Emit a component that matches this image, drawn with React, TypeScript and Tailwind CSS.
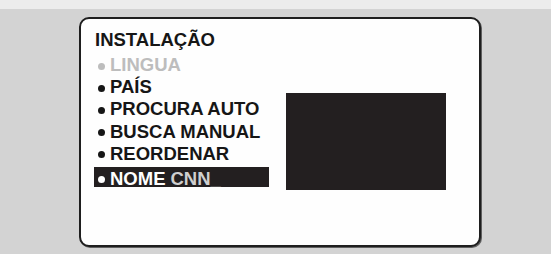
import React from "react";

const items: { label: string; muted?: boolean }[] = [
  { label: "LINGUA", muted: true },
  { label: "PAÍS" },
  { label: "PROCURA AUTO" },
  { label: "BUSCA MANUAL" },
  { label: "REORDENAR" },
];

function Dot({ className }: { className: string }) {
  return <span className={`mr-[5px] ml-[4px] inline-block h-[7px] w-[7px] shrink-0 rounded-full ${className}`} />;
}

export default function App() {
  return (
    <div
      className="flex h-[254px] w-[551px] flex-col overflow-hidden bg-[#d3d3d3]"
      style={{ fontFamily: '"Liberation Sans", Arial, sans-serif' }}
    >
      <div className="h-[9px] w-full shrink-0 bg-[#ececec]" />
      <div className="pl-[79px] pt-[8px]">
        <div className="flex h-[230px] w-[402px] rounded-[10px] border-2 border-[#1e1e1e] bg-[#fefefe] pl-[13px] pt-[10px] shadow-[1px_1px_0_rgba(0,0,0,0.55)]">
          <div className="flex w-[175px] flex-col font-bold text-[18.5px] text-[#161616]">
            <div className="ml-[1px] mb-[3px] h-[22px] leading-[22px] whitespace-nowrap">INSTALAÇÃO</div>
            {items.map((it) => (
              <div
                key={it.label}
                className={`flex h-[22.2px] items-center leading-[22.2px] whitespace-nowrap ${it.muted ? "text-[#bdbdbd]" : ""}`}
              >
                <Dot className={`mt-[2px] ${it.muted ? "bg-[#bdbdbd]" : "bg-[#161616]"}`} />
                <span>{it.label}</span>
              </div>
            ))}
            <div className="mt-[2px] flex h-[20px] items-start bg-[#231f20] leading-[23px] whitespace-nowrap">
              <Dot className="mt-[9px] bg-white" />
              <span className="text-white">NOME</span>
              <span className="ml-[5px] text-[#cfcfcf]">CNN</span>
              <span className="text-[#6e6e6e]">_</span>
            </div>
          </div>
          <div className="ml-[17px] mt-[64px] h-[97px] w-[160px] bg-[#231f20]" />
        </div>
      </div>
    </div>
  );
}
